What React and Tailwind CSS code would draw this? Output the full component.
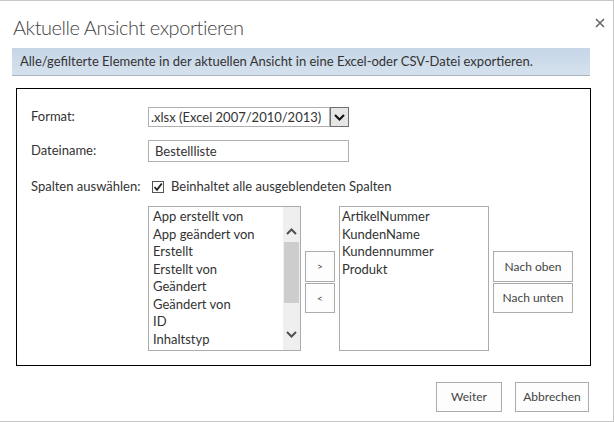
import React from "react";

const font = { fontFamily: 'Lato, "Open Sans", sans-serif' };

function ChevronUp() {
  return (
    <svg width="11" height="7" viewBox="0 0 11 7" fill="none">
      <path d="M1 6 L5.5 1.5 L10 6" stroke="#505050" strokeWidth="2" />
    </svg>
  );
}
function ChevronDown({ color = "#505050" }) {
  return (
    <svg width="11" height="7" viewBox="0 0 11 7" fill="none">
      <path d="M1 1 L5.5 5.5 L10 1" stroke={color} strokeWidth="2" />
    </svg>
  );
}

const leftItems = [
  "App erstellt von",
  "App geändert von",
  "Erstellt",
  "Erstellt von",
  "Geändert",
  "Geändert von",
  "ID",
  "Inhaltstyp",
];
const rightItems = ["ArtikelNummer", "KundenName", "Kundennummer", "Produkt"];

export default function App() {
  return (
    <div
      style={font}
      className="w-[614px] h-[422px] bg-white border-t border-r border-b border-[#c6c6c6] flex flex-col text-[#333] overflow-hidden"
    >
      <div className="flex justify-between pl-[13px] pr-[8px] pt-[12px] h-[47px]">
        <div className="text-[20px] tracking-[-0.45px] font-light leading-[28px] text-[#444]">
          Aktuelle Ansicht exportieren
        </div>
        <svg width="10" height="10" viewBox="0 0 10 10" className="mt-[5px]">
          <path d="M1 1 L9 9 M9 1 L1 9" stroke="#666" strokeWidth="1.6" />
        </svg>
      </div>
      <div className="ml-[12px] w-[578px] h-[28px] bg-gradient-to-b from-[#c6d6e7] to-[#d5e1ed] border-b border-[#a8b6c4] pl-[8px] text-[13px] leading-[27px] text-[#333]">
        Alle/gefilterte Elemente in der aktuellen Ansicht in eine Excel-oder CSV-Datei exportieren.
      </div>
      <div className="ml-[16px] mt-[12px] w-[575px] h-[278px] border border-black pl-[14px] pt-[18px] text-[13px]">
        <div className="flex items-center h-[20px]">
          <div className="w-[117px]">Format:</div>
          <div className="flex h-[20px]">
            <div className="w-[182px] border border-[#b0b0b0] pl-[2px] leading-[18px] text-[#333]">
              .xlsx (Excel 2007/2010/2013)
            </div>
            <div className="w-[19px] border border-[#6f6f6f] bg-[#e6e6e6] flex items-center justify-center">
              <ChevronDown color="#111" />
            </div>
          </div>
        </div>
        <div className="flex items-center mt-[13px] h-[22px]">
          <div className="w-[117px]">Dateiname:</div>
          <div className="w-[201px] h-[22px] border border-[#b0b0b0] pl-[6px] leading-[20px]">
            Bestellliste
          </div>
        </div>
        <div className="flex items-center mt-[16px] h-[18px]">
          <div className="w-[121px]">Spalten auswählen:</div>
          <div className="w-[12px] h-[12px] border border-[#555] bg-white flex items-center justify-center">
            <svg width="10" height="10" viewBox="0 0 10 10">
              <path d="M1.5 5 L4 7.8 L8.8 1.5" stroke="#222" strokeWidth="1.8" fill="none" />
            </svg>
          </div>
          <div className="ml-[7px]">Beinhaltet alle ausgeblendeten Spalten</div>
        </div>
        <div className="flex mt-[10px] ml-[117px]">
          <div className="w-[153px] h-[145px] border border-[#ababab] flex">
            <div className="flex-1 pl-[4px] pt-[1px] leading-[17.5px]">
              {leftItems.map((t) => (
                <div key={t}>{t}</div>
              ))}
            </div>
            <div className="w-[17px] bg-[#efefef] flex flex-col items-center">
              <div className="mt-[21px] h-[8px]">
                <ChevronUp />
              </div>
              <div className="mt-[6px] w-[15px] h-[61px] bg-[#cdcdcd]" />
              <div className="mt-[28px]">
                <ChevronDown />
              </div>
            </div>
          </div>
          <div className="flex flex-col ml-[4px] mt-[45px] gap-[1px]">
            <button className="w-[30px] h-[31px] border border-[#ababab] bg-[#fdfdfd] text-[10px] text-[#444]">
              &gt;
            </button>
            <button className="w-[30px] h-[30px] border border-[#ababab] bg-[#fdfdfd] text-[10px] text-[#444]">
              &lt;
            </button>
          </div>
          <div className="ml-[4px] w-[150px] h-[145px] border border-[#ababab] pl-[2px] pt-[1px] leading-[17.5px]">
            {rightItems.map((t) => (
              <div key={t}>{t}</div>
            ))}
          </div>
          <div className="flex flex-col ml-[4px] mt-[45px] gap-[1px]">
            <button className="w-[80px] h-[31px] border border-[#ababab] bg-[#fdfdfd] text-[12px] text-[#444]">
              Nach oben
            </button>
            <button className="w-[80px] h-[30px] border border-[#ababab] bg-[#fdfdfd] text-[12px] text-[#444]">
              Nach unten
            </button>
          </div>
        </div>
      </div>
      <div className="flex justify-end gap-[13px] pr-[24px] mt-[16px]">
        <button className="w-[66px] h-[30px] border border-[#ababab] bg-[#fdfdfd] text-[12px] text-[#444]">
          Weiter
        </button>
        <button className="w-[74px] h-[30px] border border-[#ababab] bg-[#fdfdfd] text-[12px] text-[#444]">
          Abbrechen
        </button>
      </div>
    </div>
  );
}
